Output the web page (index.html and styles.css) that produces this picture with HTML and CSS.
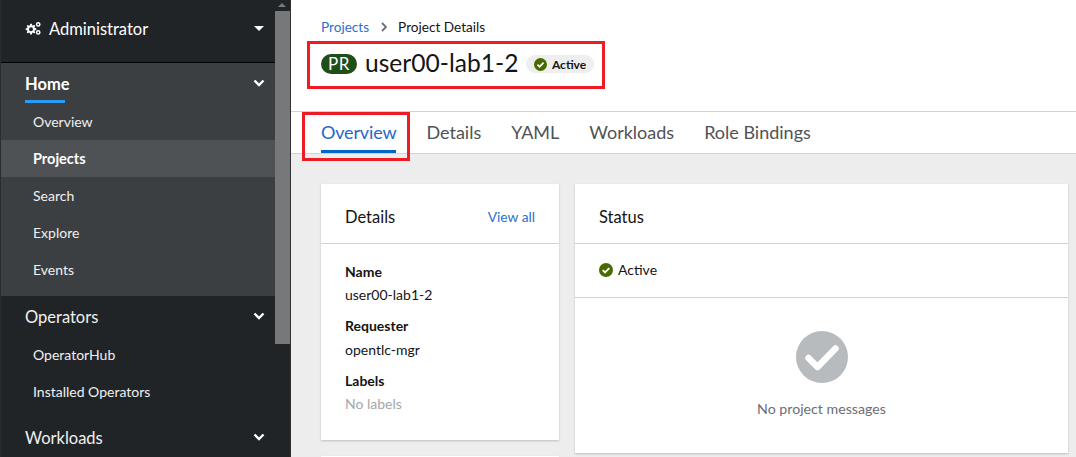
FILE: index.html
```html
<!DOCTYPE html>
<html lang="en">
<head>
    <meta charset="UTF-8">
    <title>Project Details</title>
    <link rel="stylesheet" href="styles.css">
</head>
<body>
    <div id="nav">
        <div class="switcher">
            <svg class="cogs" viewBox="0 0 16 13" width="16" height="13">
                <path fill="#fff" fill-rule="evenodd" d="M5.200 1.800h1.600l.3 1.400.9.4 1.200-.8 1.100 1.100-.8 1.200.4.900 1.400.3v1.600l-1.400.3-.4.9.8 1.200-1.100 1.100-1.200-.8-.9.4-.3 1.400H5.200l-.3-1.400-.9-.4-1.200.8-1.100-1.100.8-1.200-.4-.9L.7 8V6.400l1.400-.3.4-.9-.8-1.200 1.100-1.100 1.200.8.9-.4zM6 5.200a2 2 0 1 0 0 4 2 2 0 0 0 0-4z"/>
                <path fill="#fff" fill-rule="evenodd" d="M13.200 0a2.400 2.400 0 1 1 0 4.800 2.400 2.400 0 0 1 0-4.800zm0 1.500a.9.9 0 1 0 0 1.800.9.9 0 0 0 0-1.800zM13.200 8a2.400 2.400 0 1 1 0 4.800 2.400 2.400 0 0 1 0-4.800zm0 1.500a.9.9 0 1 0 0 1.800.9.9 0 0 0 0-1.800z"/>
            </svg>
            <span class="switcher-name">Administrator</span>
            <i class="caret"></i>
        </div>
        <div class="group open">
            <div class="group-title">
                <span class="current">Home</span>
                <svg class="chev" viewBox="0 0 12 8" width="12" height="8"><path d="M1.500 1.500 6 6l4.500-4.500" fill="none" stroke="#fff" stroke-width="2.400"/></svg>
            </div>
            <ul>
                <li>Overview</li>
                <li class="select">Projects</li>
                <li>Search</li>
                <li>Explore</li>
                <li>Events</li>
            </ul>
        </div>
        <div class="group">
            <div class="group-title">
                <span class="label">Operators</span>
                <svg class="chev" viewBox="0 0 12 8" width="12" height="8"><path d="M1.500 1.500 6 6l4.500-4.500" fill="none" stroke="#fff" stroke-width="2.400"/></svg>
            </div>
            <ul>
                <li>OperatorHub</li>
                <li>Installed Operators</li>
            </ul>
        </div>
        <div class="group">
            <div class="group-title">
                <span class="label">Workloads</span>
                <svg class="chev" viewBox="0 0 12 8" width="12" height="8"><path d="M1.500 1.500 6 6l4.500-4.500" fill="none" stroke="#fff" stroke-width="2.400"/></svg>
            </div>
        </div>
    </div>
    <div id="scrollbar">
        <div class="scroll-up"><i></i></div>
        <div class="scroll-thumb"></div>
    </div>
    <div id="main">
        <div class="crumbs">
            <a>Projects</a>
            <svg viewBox="0 0 6 10" width="6" height="10"><path d="M1 1l4 4-4 4" fill="none" stroke="#6a6e73" stroke-width="1.800"/></svg>
            <span>Project Details</span>
        </div>
        <div class="title">
            <span class="pr">PR</span>
            <h1>user00-lab1-2</h1>
            <span class="pill">
                <svg viewBox="0 0 14 14" width="13" height="13"><circle cx="7" cy="7" r="7" fill="#486b00"/><path d="M3.700 7.200l2.300 2.300 4.300-4.400" fill="none" stroke="#fff" stroke-width="1.900"/></svg>
                Active
            </span>
        </div>
        <ul class="tabs">
            <li class="select">Overview</li>
            <li>Details</li>
            <li>YAML</li>
            <li>Workloads</li>
            <li>Role Bindings</li>
        </ul>
        <div class="dash">
            <div class="col-left">
                <div class="card details">
                    <div class="card-head">
                        <h2>Details</h2>
                        <a>View all</a>
                    </div>
                    <dl>
                        <dt>Name</dt>
                        <dd>user00-lab1-2</dd>
                        <dt>Requester</dt>
                        <dd>opentlc-mgr</dd>
                        <dt>Labels</dt>
                        <dd class="muted">No labels</dd>
                    </dl>
                </div>
                <div class="card stub"></div>
            </div>
            <div class="card status">
                <div class="card-head">
                    <h2>Status</h2>
                </div>
                <div class="status-row">
                    <svg viewBox="0 0 14 14" width="14" height="14"><circle cx="7" cy="7" r="7" fill="#486b00"/><path d="M3.700 7.200l2.300 2.300 4.300-4.400" fill="none" stroke="#fff" stroke-width="1.900"/></svg>
                    Active
                </div>
                <div class="empty">
                    <svg viewBox="0 0 52 52" width="52" height="52"><circle cx="26" cy="26" r="26" fill="#b8bbbe"/><path d="M12.500 27l9 9 18-18.500" fill="none" stroke="#fff" stroke-width="6.500" stroke-linejoin="round" stroke-linecap="round"/></svg>
                    <p>No project messages</p>
                </div>
            </div>
        </div>
    </div>
    <div class="mark mark-title"></div>
    <div class="mark mark-tab"></div>
</body>
</html>
```

FILE: styles.css
```css
*{
    margin:0;
    padding:0;
    border:0;
    box-sizing:border-box;
}
html,body{
    height:457px;
    overflow:hidden;
}
body{
    display:flex;
    position:relative;
    background:#fff;
    font-family:"Lato","Noto Sans",sans-serif;
    font-size:14px;
    color:#151515;
}
ul{
    list-style:none;
}
a{
    color:#2b6fd0;
}

/* left nav */
#nav{
    flex:none;
    width:275px;
    height:457px;
    overflow:hidden;
    background:#212427;
    color:#f0f0f0;
    border-left:1px solid #2a2d30;
}
.switcher{
    display:flex;
    align-items:center;
    height:63px;
    padding:0 11px 5px 24px;
    border-bottom:1px solid #030303;
    color:#fff;
    font-size:16.5px;
}
.cogs{
    margin-right:8px;
}
.switcher-name{
    flex:1;
}
.caret{
    width:0;
    height:0;
    border-left:5px solid transparent;
    border-right:5px solid transparent;
    border-top:5px solid #fff;
}
.group-title{
    display:flex;
    justify-content:space-between;
    align-items:center;
    height:40px;
    padding:0 10px 0 24px;
    font-size:16.5px;
}
.label{
    padding-top:2px;
}
.group.open{
    height:233px;
    background:#3c3f42;
}
.group.open .group-title{
    font-weight:700;
    color:#fff;
}
.group ul{
    padding-bottom:7px;
}
.current{
    position:relative;
    display:block;
    height:40px;
    line-height:42px;
}
.current:after{
    content:"";
    position:absolute;
    left:0;
    bottom:0;
    width:40px;
    height:3px;
    background:#2b9af3;
}
.group li{
    height:37px;
    line-height:37px;
    padding-left:32px;
}
.group li.select{
    background:#4f5255;
    color:#fff;
    font-weight:700;
    font-size:14.5px;
}

/* scrollbar */
#scrollbar{
    flex:none;
    width:16px;
    height:457px;
    background:#212427;
    border-right:1px solid #2f3133;
}
.scroll-up{
    height:11px;
    padding:3px 0 0 3px;
}
.scroll-up i{
    display:block;
    width:0;
    height:0;
    border-left:4px solid transparent;
    border-right:4px solid transparent;
    border-bottom:4px solid #77797b;
}
.scroll-thumb{
    height:333px;
    background:#77787a;
}

/* page head */
#main{
    flex:1;
    min-width:0;
    display:flex;
    flex-direction:column;
}
.crumbs{
    flex:none;
    display:flex;
    align-items:center;
    gap:11.5px;
    height:41px;
    padding:13px 0 0 30px;
    font-size:13.6px;
}
.title{
    flex:none;
    display:flex;
    align-items:center;
    height:42px;
    padding-left:30px;
}
.pr{
    width:36px;
    height:20px;
    margin:4px 8px 0 0;
    border-radius:10px;
    background:#1e4f18;
    color:#fff;
    font-size:17px;
    line-height:20px;
    text-align:center;
    letter-spacing:.5px;
}
h1{
    font-size:24.6px;
    font-weight:400;
    margin-right:7.5px;
}
.pill{
    display:flex;
    align-items:center;
    gap:5px;
    height:18px;
    margin-top:4px;
    padding:0 8px;
    border-radius:9px;
    background:#eee;
    font-size:12px;
    font-weight:700;
}
.tabs{
    flex:none;
    display:flex;
    gap:30px;
    height:43px;
    margin-top:28px;
    padding-left:30px;
    border-top:1px solid #d2d2d2;
    border-bottom:1px solid #d2d2d2;
    color:#4f5255;
    font-size:18px;
}
.tabs li{
    height:41px;
    line-height:40px;
}
.tabs .select{
    color:#2168c8;
    border-bottom:3px solid #06c;
    letter-spacing:-.15px;
}

/* dashboard */
.dash{
    flex:1;
    display:flex;
    gap:16px;
    padding:30px 8px 0 30px;
    background:#ededed;
}
.col-left{
    flex:none;
    width:238px;
}
.card{
    background:#fff;
    box-shadow:0 1px 2px rgba(3,3,3,.2);
}
.details{
    height:256px;
    margin-bottom:16px;
}
.stub{
    height:20px;
}
.status{
    flex:1;
    height:269px;
}
.card-head{
    display:flex;
    justify-content:space-between;
    align-items:center;
    height:60px;
    padding:6px 24px 0;
    border-bottom:1px solid #d2d2d2;
}
.card-head a{
    font-size:13.8px;
}
h2{
    font-size:16.5px;
    font-weight:400;
}
dl{
    padding:17px 24px;
}
dt{
    height:21px;
    line-height:21px;
    font-weight:700;
}
dd{
    height:33px;
    line-height:26px;
}
dt:nth-of-type(2){
    height:22px;
}
dd.muted{
    color:#a5a7a9;
}
.status-row{
    display:flex;
    align-items:center;
    gap:5px;
    height:54px;
    padding:0 0 2px 24px;
    border-bottom:1px solid #d2d2d2;
}
.empty{
    display:flex;
    flex-direction:column;
    align-items:center;
    padding-top:33px;
    color:#6a6e73;
}
.empty p{
    margin-top:17px;
    font-size:14.2px;
}

/* red call-outs drawn over the screenshot */
.mark{
    position:absolute;
    border:3px solid #ed1c24;
}
.mark-title{
    left:307px;
    top:41px;
    width:298px;
    height:48px;
}
.mark-tab{
    left:302px;
    top:112px;
    width:108px;
    height:49px;
}
```
